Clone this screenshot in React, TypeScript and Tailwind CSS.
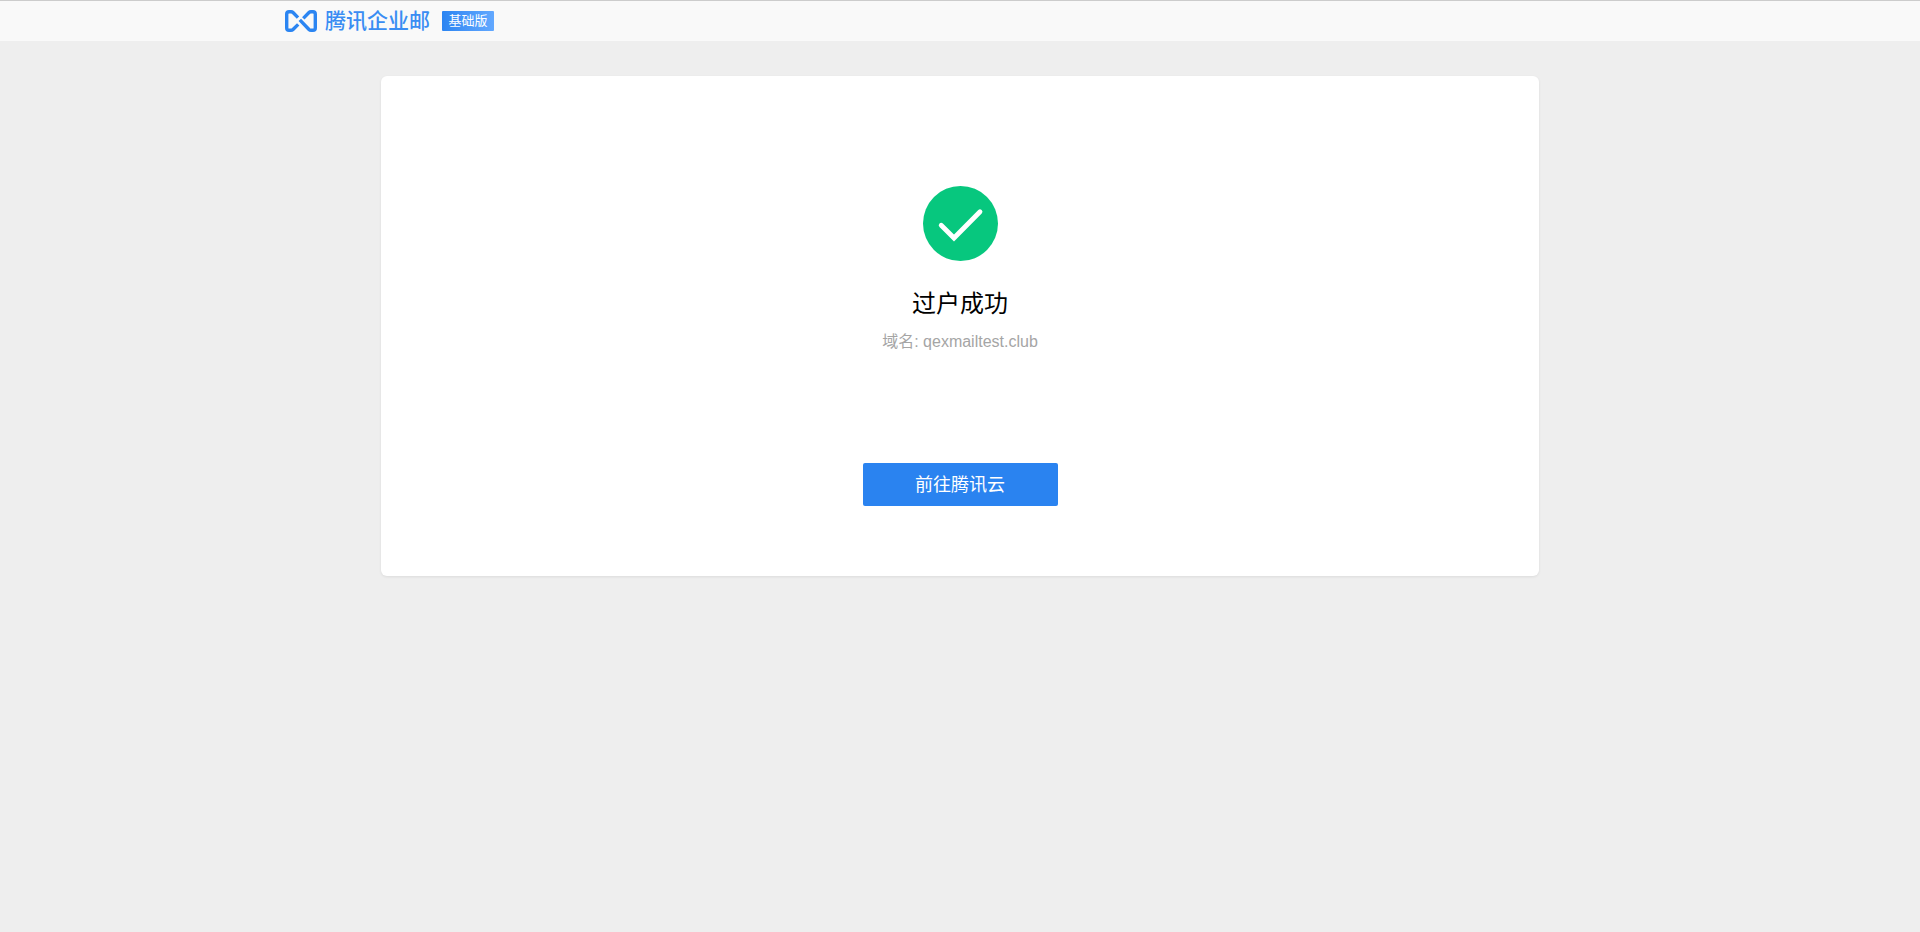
function LogoMark() {
  return (
    <svg width="32" height="22" viewBox="0 0 32 22" fill="none" stroke="#2b85f2" strokeWidth="3.4" aria-hidden="true">
      <path d="M13 7.6 8 2.5Q7.2 1.7 6 1.7H4Q1.7 1.7 1.7 4V18Q1.7 20.3 4 20.3H6Q7.2 20.3 8 19.5L13.2 14.4" />
      <path d="M14.8 9.8 24 19.5Q24.8 20.3 26 20.3H28Q30.3 20.3 30.3 18V4Q30.3 1.7 28 1.7H26Q24.8 1.7 24 2.5L18.3 8.4" />
    </svg>
  );
}

function SuccessIcon() {
  return (
    <svg width="75" height="75" viewBox="0 0 75 75" fill="none" aria-hidden="true">
      <circle cx="37.5" cy="37.5" r="37.5" fill="#07c77e" />
      <path d="M18.2 39.2 31 52 57 25.8" stroke="#fff" strokeWidth="4.8" strokeLinecap="round" />
    </svg>
  );
}

export default function App() {
  return (
    <div className="min-h-screen bg-[#eee] font-['Liberation_Sans','Noto_Sans_CJK_SC',sans-serif]">
      <header className="border-t border-[#ccc] bg-[#f9f9f9]">
        <div className="mx-auto flex h-10 max-w-[1350px] items-center">
          <LogoMark />
          <span className="ml-2 text-[21px] leading-6 font-medium text-[#3a8df3]">腾讯企业邮</span>
          <span className="ml-3 flex h-5 w-[52px] items-center justify-center rounded-[1px] bg-linear-to-r from-[#2b85f2] to-[#62a8ff] text-[13px] leading-5 text-white">
            基础版
          </span>
        </div>
      </header>
      <main className="mx-auto mt-[35px] flex max-w-[1158px] flex-col items-center rounded-md bg-white pt-[110px] pb-[70px] shadow-[0_1px_3px_rgba(0,0,0,0.08)]">
        <SuccessIcon />
        <h1 className="mt-[25px] text-2xl leading-9 text-black">过户成功</h1>
        <p className="mt-2 text-base leading-6 text-[#a5a5a5]">域名: qexmailtest.club</p>
        <button type="button" className="mt-[109px] h-[43px] w-[195px] rounded-[2px] bg-[#2a83f0] text-lg leading-6 text-white">
          前往腾讯云
        </button>
      </main>
    </div>
  );
}
